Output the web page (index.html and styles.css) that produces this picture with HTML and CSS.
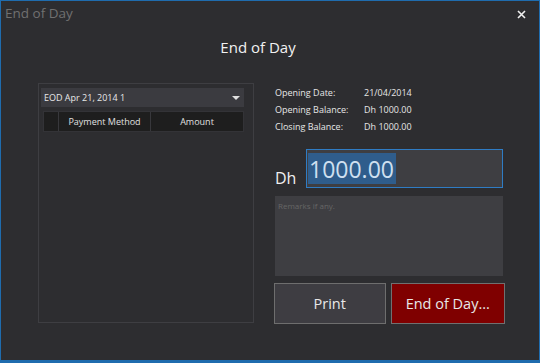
FILE: index.html
```html
<!DOCTYPE html>
<html>
<head>
<meta charset="utf-8">
<link rel="stylesheet" href="styles.css">
</head>
<body>
<div class="window">
  <div class="titlebar">
    <span class="title">End of Day</span>
    <svg class="close" width="9" height="9" viewBox="0 0 9 9"><path d="M1 1L8 8M8 1L1 8" stroke="#f0f0f0" stroke-width="1.6"/></svg>
  </div>
  <h1 class="heading">End of Day</h1>
  <div class="content">
    <div class="left-panel">
      <div class="dropdown">
        <span>EOD Apr 21, 2014 1</span>
        <svg class="arrow" width="8" height="4" viewBox="0 0 8 4"><path d="M0 0h8L4 4z" fill="#e0e0e0"/></svg>
      </div>
      <div class="table-head">
        <div class="cell c0"></div>
        <div class="cell c1">Payment Method</div>
        <div class="cell c2">Amount</div>
      </div>
    </div>
    <div class="right-panel">
      <div class="info">
        <div class="row"><span class="lbl">Opening Date:</span><span>21/04/2014</span></div>
        <div class="row"><span class="lbl">Opening Balance:</span><span>Dh 1000.00</span></div>
        <div class="row"><span class="lbl">Closing Balance:</span><span>Dh 1000.00</span></div>
      </div>
      <div class="amount-row">
        <span class="currency">Dh</span>
        <div class="amount-input"><span class="sel">1000.00</span></div>
      </div>
      <div class="remarks">Remarks if any.</div>
      <div class="buttons">
        <button class="btn print">Print</button>
        <button class="btn eod">End of Day...</button>
      </div>
    </div>
  </div>
</div>
</body>
</html>
```
FILE: styles.css
```css
* { box-sizing: border-box; }
html, body { margin: 0; padding: 0; }
body {
  width: 540px;
  height: 363px;
  background: #2d2d30;
  font-family: "Open Sans", "Noto Sans", sans-serif;
  overflow: hidden;
}
.window {
  width: 540px;
  height: 363px;
  border: 1px solid #1f6cae;
  border-bottom-width: 3px;
  background: #2d2d30;
  display: flex;
  flex-direction: column;
}
.titlebar {
  height: 27px;
  display: flex;
  justify-content: space-between;
  align-items: flex-start;
  padding: 2px 0 0 4px;
}
.title {
  color: #707070;
  font-size: 13.5px;
  line-height: 20px;
}
.close {
  margin-right: 13px;
  margin-top: 7px;
}
.heading {
  margin: 8px 0 0 0;
  text-align: center;
  color: #f2f2f2;
  font-weight: normal;
  font-size: 15px;
  line-height: 22px;
  padding-right: 24px;
}
.content {
  display: flex;
  margin-top: 25px;
  padding-left: 37px;
}
.left-panel {
  width: 216px;
  height: 240px;
  border: 1px solid #3e3e42;
  padding: 4px 9px 0 2px;
}
.dropdown {
  height: 19px;
  background: #3b3b40;
  display: flex;
  justify-content: space-between;
  align-items: center;
  padding: 0 4px 0 3px;
  color: #e8e8e8;
  font-size: 9px;
}
.arrow { margin-top: 1px; }
.table-head {
  margin-top: 4px;
  margin-left: 2px;
  display: flex;
  height: 21px;
  background: #1e1e1e;
  border: 1px solid #333337;
}
.cell {
  color: #e0e0e0;
  font-size: 9px;
  display: flex;
  align-items: center;
  justify-content: center;
  border-left: 1px solid #38383c;
}
.c0 { width: 14px; border-left: none; }
.c1 { width: 92px; }
.c2 { flex: 1; }
.right-panel {
  margin-left: 21px;
  width: 230px;
  display: flex;
  flex-direction: column;
}
.info {
  padding-top: 1px;
  color: #e6e6e6;
  font-size: 9px;
}
.row {
  display: flex;
  height: 17px;
  align-items: center;
}
.lbl { width: 89px; }
.amount-row {
  display: flex;
  align-items: flex-end;
  margin-top: 14px;
}
.currency {
  color: #f0f0f0;
  font-size: 16px;
  width: 31px;
  line-height: 20px;
}
.amount-input {
  width: 197px;
  height: 39px;
  border: 1px solid #2f7cc4;
  background: #3e3e42;
  padding: 3px 3px 3px 1px;
  display: flex;
  align-items: stretch;
}
.sel {
  background: #2f5d8c;
  color: #cfe0f0;
  font-size: 23px;
  line-height: 32px;
  padding: 0 2px 0 1px;
}
.remarks {
  margin-top: 8px;
  width: 228px;
  height: 80px;
  background: #3e3e42;
  color: #666;
  font-size: 8px;
  padding: 4px 3px;
}
.buttons {
  display: flex;
  gap: 5px;
  margin-top: 7px;
  margin-left: -1px;
}
.btn {
  height: 41px;
  font-family: inherit;
  font-size: 14.5px;
  color: #e8e8e8;
  border: 1px solid #6e6e6e;
  padding: 0;
}
.print { width: 112px; background: #3e3d42; }
.eod { width: 115px; background: #7f0000; border-color: #707070; }
```
